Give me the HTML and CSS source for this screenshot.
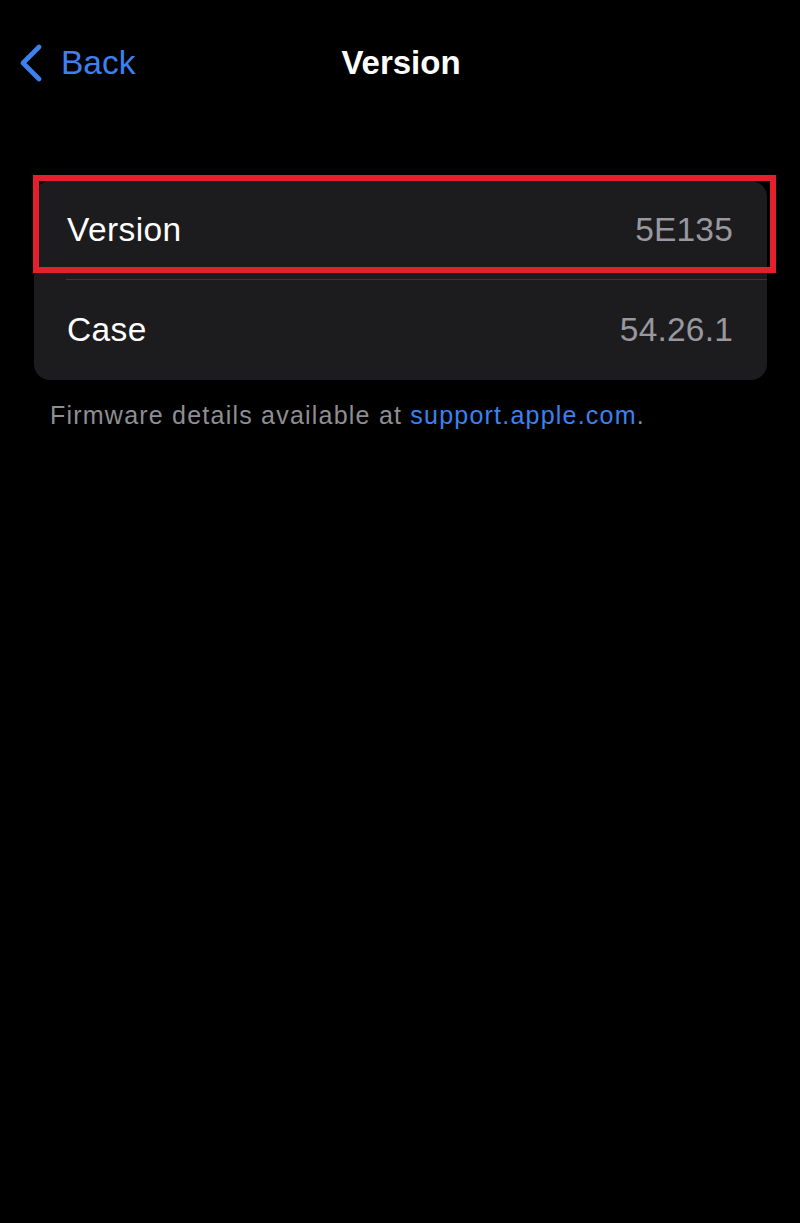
FILE: index.html
```html
<!DOCTYPE html>
<html lang="en">
<head>
<meta charset="utf-8">
<title>Version</title>
<link rel="stylesheet" href="styles.css">
</head>
<body>
<div class="screen">
  <header class="nav">
    <div class="back">
      <svg class="chev" width="26" height="38" viewBox="0 0 26 38"><path d="M21 3 L5 19 L21 35" fill="none" stroke="#3b82f0" stroke-width="4.6" stroke-linecap="round" stroke-linejoin="round"/></svg>
      <span class="back-label">Back</span>
    </div>
    <h1 class="title">Version</h1>
  </header>
  <section class="group">
    <div class="card">
      <div class="row row-first">
        <span class="label">Version</span>
        <span class="value">5E135</span>
        <div class="highlight"></div>
      </div>
      <div class="row row-last">
        <span class="label">Case</span>
        <span class="value">54.26.1</span>
      </div>
    </div>
    <p class="footer">Firmware details available at <span class="link">support.apple.com</span>.</p>
  </section>
</div>
</body>
</html>
```
FILE: styles.css
```css
html, body {
  margin: 0;
  padding: 0;
  background: #000;
}
body {
  font-family: "Liberation Sans", Arial, sans-serif;
  color: #fff;
}
.screen {
  width: 800px;
  height: 1223px;
  background: #000;
}
.nav {
  position: relative;
  height: 128px;
  display: flex;
  align-items: flex-start;
}
.back {
  display: flex;
  align-items: center;
  gap: 17px;
  padding: 44px 0 0 18px;
  height: 38px;
}
.chev {
  display: block;
}
.back-label {
  color: #3b82f0;
  font-size: 33.5px;
  line-height: 38px;
}
.title {
  position: absolute;
  left: 0;
  right: 0;
  top: 44px;
  margin: 0;
  text-align: center;
  font-size: 33px;
  font-weight: 700;
  line-height: 38px;
  padding-left: 2px;
}
.group {
  padding: 53px 33px 0 34px;
}
.card {
  background: #1c1c1e;
  border-radius: 16px;
}
.row {
  position: relative;
  display: flex;
  justify-content: space-between;
  align-items: center;
  height: 99px;
  padding: 0 34px 0 33px;
}
.row-first {
  height: 98px;
}
.row-last {
  height: 101px;
}
.row-first::after {
  content: "";
  position: absolute;
  left: 32px;
  right: 0;
  bottom: -1px;
  height: 1px;
  background: #38383a;
}
.label {
  font-size: 33.5px;
  letter-spacing: 0.4px;
  color: #fff;
}
.value {
  font-size: 33.5px;
  letter-spacing: 0.2px;
  color: #98989e;
}
.highlight {
  position: absolute;
  left: -1px;
  top: -6px;
  right: -9px;
  bottom: 6px;
  border: 6.5px solid #e3202b;
  pointer-events: none;
}
.footer {
  margin: 19px 0 0 16px;
  font-size: 25px;
  letter-spacing: 1.22px;
  color: #8e8e93;
  line-height: 32px;
}
.link {
  color: #3b82f0;
}
```
